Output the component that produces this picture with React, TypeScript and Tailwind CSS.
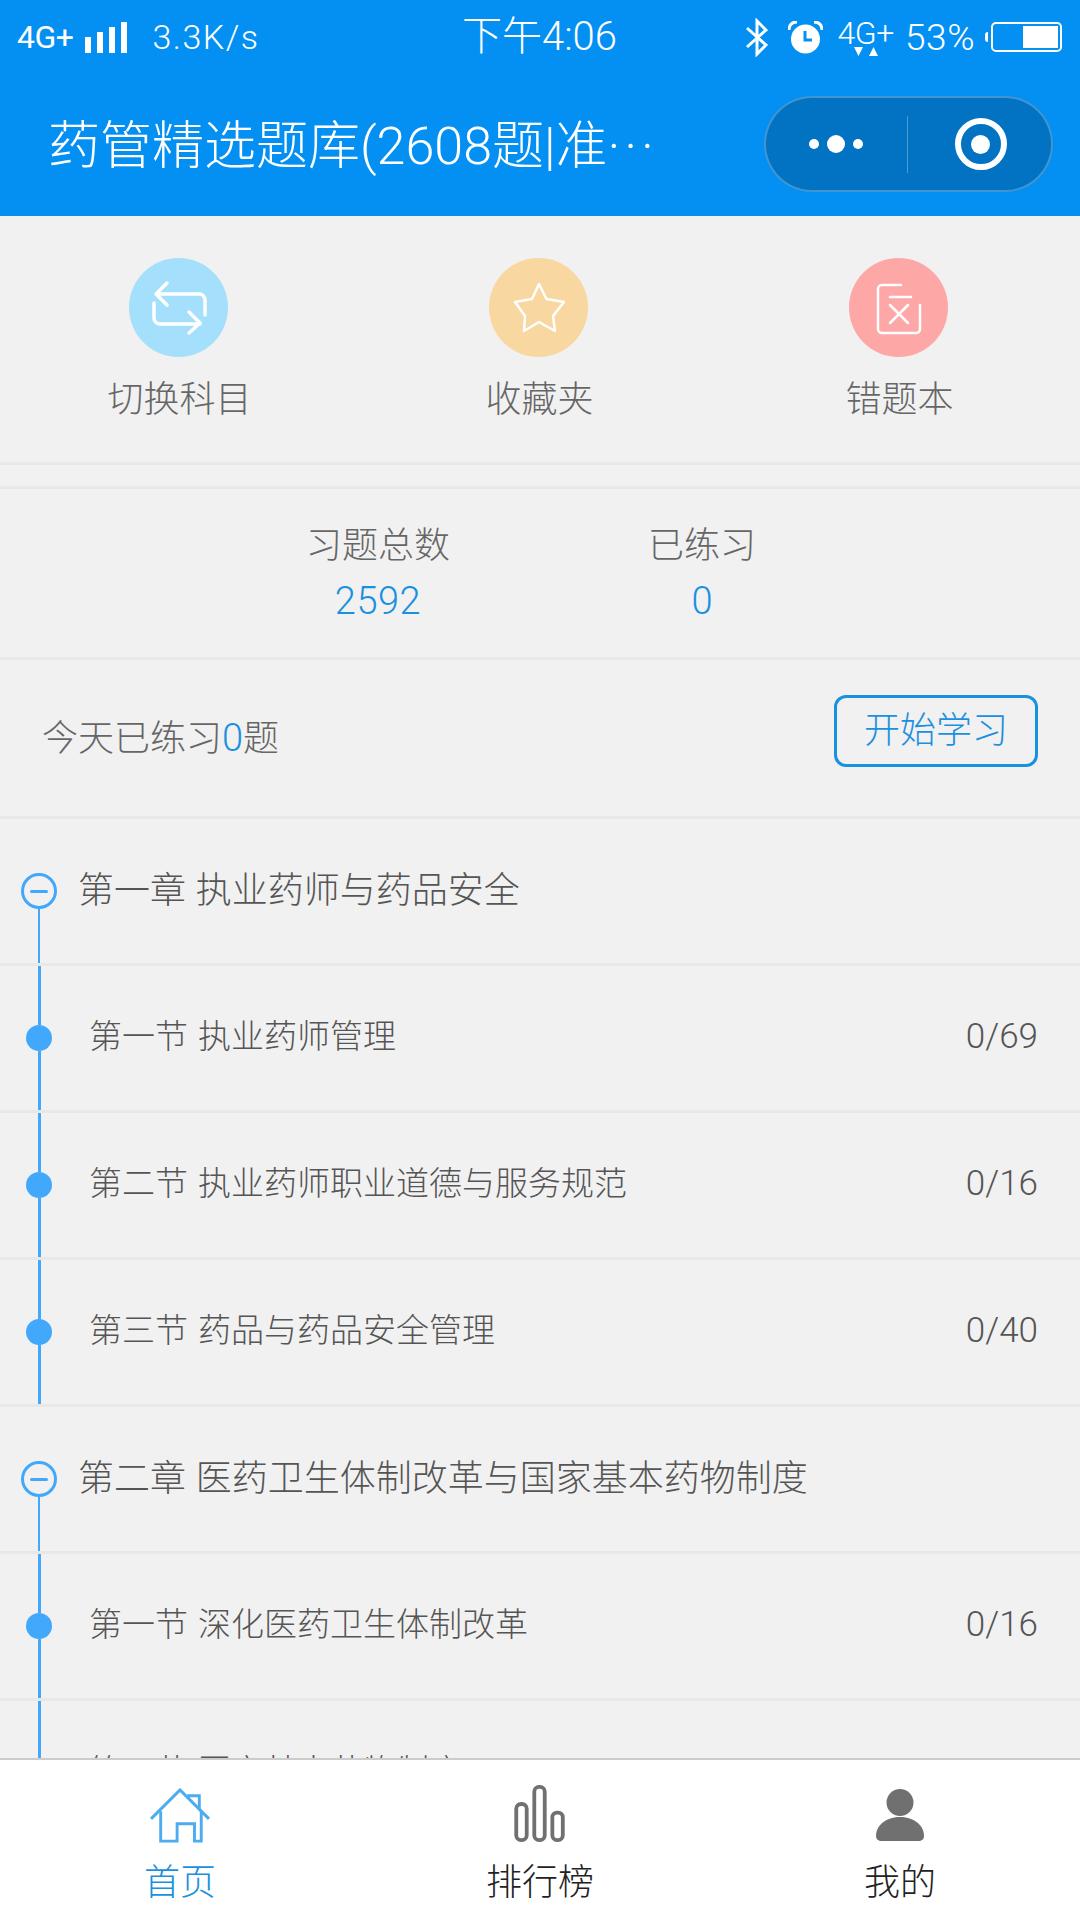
import React from 'react';

const font = "font-['Roboto','Noto_Sans_CJK_SC',sans-serif]";

const shortcuts = [
  { label: '切换科目', bg: 'bg-[#a4e0fb]', icon: 'switch' },
  { label: '收藏夹', bg: 'bg-[#f8d7a0]', icon: 'star' },
  { label: '错题本', bg: 'bg-[#fea7a7]', icon: 'wrong' },
];

const rows = [
  { type: 'chapter', title: '第一章 执业药师与药品安全' },
  { type: 'section', title: '第一节 执业药师管理', count: '0/69' },
  { type: 'section', title: '第二节 执业药师职业道德与服务规范', count: '0/16' },
  { type: 'section', title: '第三节 药品与药品安全管理', count: '0/40' },
  { type: 'chapter', title: '第二章 医药卫生体制改革与国家基本药物制度' },
  { type: 'section', title: '第一节 深化医药卫生体制改革', count: '0/16' },
  { type: 'section', title: '第二节 国家基本药物制度', count: '0/16' },
];

function ShortcutIcon({ name }: { name: string }) {
  return (
    <svg width="99" height="99" viewBox="0 0 99 99" fill="none" stroke="#fff" strokeLinecap="round" strokeLinejoin="round">
      {name === 'switch' && (
        <g strokeWidth="3.5">
          <path d="M38 25 27 36 38 47" />
          <path d="M28 36H70a6 6 0 0 1 6 6V57" />
          <path d="M25 45V60a6 6 0 0 0 6 6H71" />
          <path d="M60 54 71 65 60 75" />
        </g>
      )}
      {name === 'star' && <path strokeWidth="2.5" d="M50 26 57.500 41 75 44 64 58 66 73 50 64 35 73 36 58 26 44 43 41Z" />}
      {name === 'wrong' && (
        <g strokeWidth="2.5">
          <path d="M52 27H33a4 4 0 0 0-4 4V71a4 4 0 0 0 4 4H67a4 4 0 0 0 4-4V47" />
          <path d="M41 39H62" />
          <path d="M41 47 59 65M59 47 41 65" />
        </g>
      )}
    </svg>
  );
}

function StatusBar() {
  return (
    <div className="flex h-[72px] items-center pl-[17px] pr-[18px] text-white">
      <div className="flex flex-1 items-center pt-[2px]">
        <span className="text-[32px] leading-none tracking-[-0.5px]">4G+</span>
        <svg className="ml-[12px]" width="42" height="31" viewBox="0 0 42 31" fill="#fff">
          <rect x="0" y="15" width="6" height="16" />
          <rect x="12" y="10" width="6" height="21" />
          <rect x="24" y="5" width="6" height="26" />
          <rect x="36" y="0" width="6" height="31" />
        </svg>
        <span className="ml-[25px] text-[34px] leading-none tracking-[1.500px] font-light">3.3K/s</span>
      </div>
      <span className="pt-[2px] text-[40px] leading-none font-light">下午4:06</span>
      <div className="flex flex-1 items-center justify-end pt-[2px]">
        <svg width="22" height="39" viewBox="0 0 22 39" fill="none" stroke="#fff" strokeWidth="3">
          <path d="M1 10 20 27 11 36V3L20 12 1 29" />
        </svg>
        <svg className="ml-[20px]" width="35" height="33" viewBox="0 0 35 33">
          <circle cx="17.500" cy="18" r="14.500" fill="#fff" />
          <path d="M17 10V19H24" fill="none" stroke="#0390f2" strokeWidth="3" />
          <path d="M1 9C1 4 4 1 9 1M34 9C34 4 31 1 26 1" fill="none" stroke="#fff" strokeWidth="3" />
        </svg>
        <div className="ml-[13px] flex w-[59px] flex-col items-center">
          <span className="text-[32px] leading-[28px] tracking-[-0.5px] font-light">4G+</span>
          <svg width="24" height="9" viewBox="0 0 24 9" fill="#fff">
            <path d="M0 0H9L4.500 9ZM15 9H24L19.500 0Z" />
          </svg>
        </div>
        <span className="ml-[10px] text-[37px] leading-none tracking-[0.500px] font-light">53%</span>
        <div className="ml-[10px] h-[10px] w-[3px] rounded-l-sm bg-white" />
        <div className="ml-[3px] flex h-[30px] w-[71px] justify-end rounded-[5px] border-2 border-white p-[2px]">
          <div className="h-full w-[35px] bg-white" />
        </div>
      </div>
    </div>
  );
}

function NavBar() {
  return (
    <div className="flex h-[144px] items-center justify-between pl-[48px] pr-[27px]">
      <h1 className="pt-[5px] text-[52px] leading-none font-light text-white">
        药管精选题库(2608题|准<span className="tracking-[4px]">···</span>
      </h1>
      <div className="flex h-[96px] w-[289px] items-center rounded-full border-2 border-white/25 bg-[#0272c2]">
        <div className="flex flex-1 items-center justify-center gap-[8px]">
          <div className="size-[10px] rounded-full bg-white" />
          <div className="size-[18px] rounded-full bg-white" />
          <div className="size-[10px] rounded-full bg-white" />
        </div>
        <div className="h-[57px] w-[1px] bg-white/30" />
        <div className="flex flex-1 items-center justify-center pl-[3px]">
          <div className="flex size-[52px] items-center justify-center rounded-full border-[6px] border-white">
            <div className="size-[19px] rounded-full bg-white" />
          </div>
        </div>
      </div>
    </div>
  );
}

function ListRow({ row }: { row: (typeof rows)[number] }) {
  const isChapter = row.type === 'chapter';
  return (
    <div className="flex h-[147px] shrink-0 border-b-[3px] border-[#e8e8e8]">
      <div className="ml-[21px] flex w-[36px] flex-col items-center">
        {isChapter ? (
          <>
            <div className="mt-[54px] flex size-[36px] shrink-0 items-center justify-center rounded-full border-[3px] border-[#42a8fb]">
              <div className="h-[3px] w-[18px] rounded-full bg-[#42a8fb]" />
            </div>
            <div className="w-[2px] flex-1 bg-[#42a8fb]" />
          </>
        ) : (
          <>
            <div className="w-[3px] flex-1 bg-[#42a8fb]" />
            <div className="size-[26px] shrink-0 rounded-full bg-[#42a8fb]" />
            <div className="w-[3px] flex-1 bg-[#42a8fb]" />
          </>
        )}
      </div>
      {isChapter ? (
        <div className="ml-[21px] flex-1 self-center text-[36px] leading-none font-light text-[#555] [word-spacing:1px]">{row.title}</div>
      ) : (
        <div className="ml-[32px] flex flex-1 items-center justify-between pr-[42px] pb-[4px] font-light text-[#555]">
          <span className="text-[33px] leading-none [word-spacing:2px]">{row.title}</span>
          <span className="text-[35px] leading-none">{row.count}</span>
        </div>
      )}
    </div>
  );
}

function TabBar() {
  return (
    <div className="grid h-[162px] shrink-0 grid-cols-3 border-t-2 border-[#cccccc] bg-white">
      <div className="flex flex-col items-center pt-[28px]">
        <svg width="62" height="56" viewBox="0 0 64 58" fill="none" stroke="#4bacf0" strokeWidth="3">
          <path d="M2 32 32 2 62 32" />
          <path d="M12 24V55H29V37H47V55H54V24" />
          <path d="M41 11V8H52V22" />
        </svg>
        <span className="mt-[21px] text-[36px] leading-none font-light text-[#1a90e0]">首页</span>
      </div>
      <div className="flex flex-col items-center pt-[25px]">
        <svg width="54" height="57" viewBox="0 0 54 60" fill="none" stroke="#707070" strokeWidth="4">
          <rect x="2" y="20" width="11" height="38" rx="5" />
          <rect x="21" y="2" width="11" height="56" rx="5" />
          <rect x="40" y="29" width="11" height="29" rx="5" />
        </svg>
        <span className="mt-[23px] text-[36px] leading-none font-light text-[#222]">排行榜</span>
      </div>
      <div className="flex flex-col items-center pt-[29px]">
        <svg width="50" height="52" viewBox="0 0 50 52" fill="#707070">
          <ellipse cx="25" cy="13.500" rx="13.500" ry="13.500" />
          <path d="M25 28C37 28 49 35 49 47 49 50 47 52 43 52H7C3 52 1 50 1 47 1 35 13 28 25 28Z" />
        </svg>
        <span className="mt-[24px] text-[36px] leading-none font-light text-[#222]">我的</span>
      </div>
    </div>
  );
}

export default function App() {
  return (
    <div className={`flex h-[1920px] w-[1080px] flex-col overflow-hidden bg-[#f1f1f1] ${font}`}>
      <div className="shrink-0 bg-[#0390f2]">
        <StatusBar />
        <NavBar />
      </div>

      <main className="min-h-0 flex-1 overflow-hidden">
        <div className="grid h-[249px] grid-cols-3 border-b-[3px] border-[#e8e8e8] pt-[42px]">
          {shortcuts.map((item) => (
            <div key={item.label} className="flex flex-col items-center">
              <div className={`mr-[3px] size-[99px] rounded-full ${item.bg}`}>
                <ShortcutIcon name={item.icon} />
              </div>
              <span className="mt-[25px] pr-[1px] text-[36px] leading-none font-light text-[#666]">{item.label}</span>
            </div>
          ))}
        </div>

        <div className="mt-[21px] flex h-[174px] justify-center border-y-[3px] border-[#e8e8e8] pt-[39px]">
          <div className="flex w-[324px] flex-col items-center gap-[18px]">
            <span className="text-[36px] leading-none font-light text-[#666]">习题总数</span>
            <span className="text-[38px] leading-none tracking-[0.500px] font-light text-[#1a90e0]">2592</span>
          </div>
          <div className="flex w-[324px] flex-col items-center gap-[18px]">
            <span className="text-[36px] leading-none font-light text-[#666]">已练习</span>
            <span className="text-[38px] leading-none font-light text-[#1a90e0]">0</span>
          </div>
        </div>

        <div className="flex h-[159px] items-center justify-between border-b-[3px] border-[#e8e8e8] pl-[42px] pr-[42px]">
          <span className="text-[36px] leading-none font-light text-[#666]">
            今天已练习<span className="text-[38px] text-[#1a90e0]">0</span>题
          </span>
          <button className="mb-[15px] h-[72px] w-[204px] rounded-[12px] border-[3px] border-[#1a90e0] text-[36px] leading-none font-light text-[#1a90e0]">
            开始学习
          </button>
        </div>

        {rows.map((row, i) => (
          <ListRow key={i} row={row} />
        ))}
      </main>

      <TabBar />
    </div>
  );
}
